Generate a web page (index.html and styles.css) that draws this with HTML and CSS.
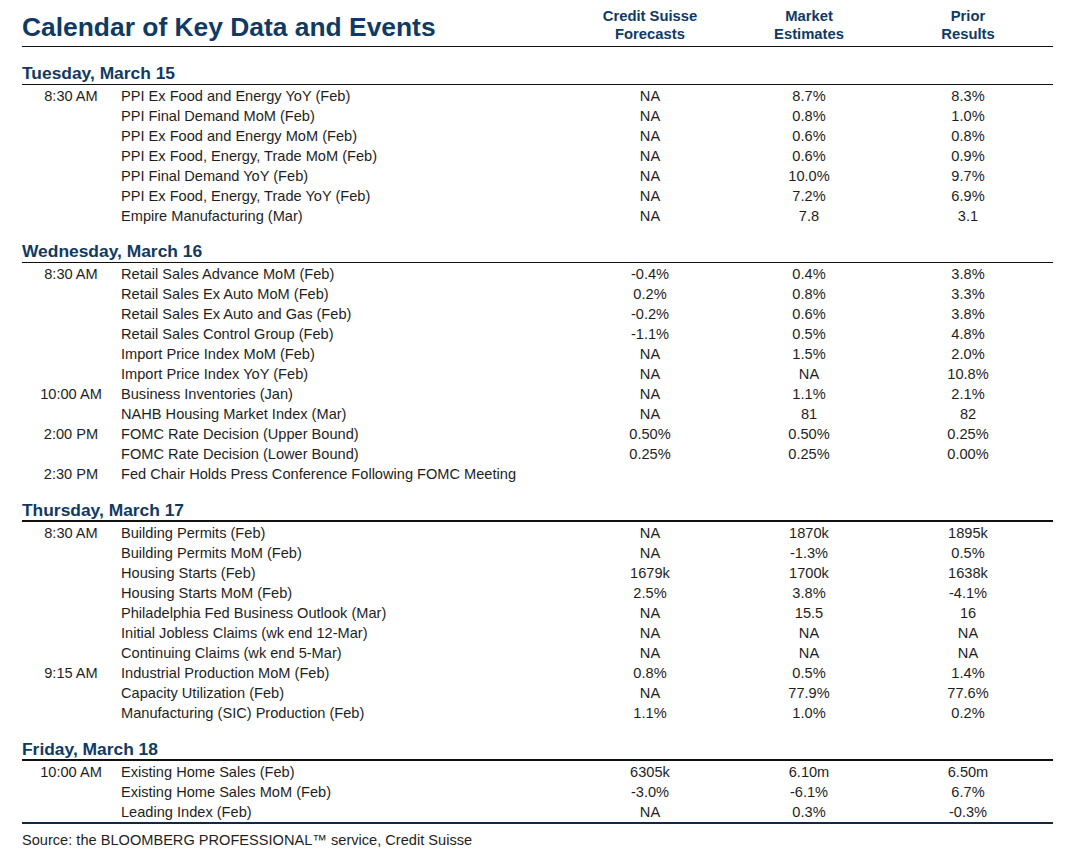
FILE: index.html
```html
<!DOCTYPE html>
<html>
<head>
<meta charset="utf-8">
<link rel="stylesheet" href="styles.css">
</head>
<body>
<div class="page">
  <div class="top grid">
    <h1 class="title">Calendar of Key Data and Events</h1>
    <div class="colhead">Credit Suisse<br>Forecasts</div>
    <div class="colhead">Market<br>Estimates</div>
    <div class="colhead">Prior<br>Results</div>
  </div>

  <section class="day">
    <h2 class="dayname thin">Tuesday, March 15</h2>
    <div class="rows">
      <div class="grid row"><span class="time">8:30 AM</span><span class="desc">PPI Ex Food and Energy YoY (Feb)</span><span class="v">NA</span><span class="v">8.7%</span><span class="v">8.3%</span></div>
      <div class="grid row"><span class="time"></span><span class="desc">PPI Final Demand MoM (Feb)</span><span class="v">NA</span><span class="v">0.8%</span><span class="v">1.0%</span></div>
      <div class="grid row"><span class="time"></span><span class="desc">PPI Ex Food and Energy MoM (Feb)</span><span class="v">NA</span><span class="v">0.6%</span><span class="v">0.8%</span></div>
      <div class="grid row"><span class="time"></span><span class="desc">PPI Ex Food, Energy, Trade MoM (Feb)</span><span class="v">NA</span><span class="v">0.6%</span><span class="v">0.9%</span></div>
      <div class="grid row"><span class="time"></span><span class="desc">PPI Final Demand YoY (Feb)</span><span class="v">NA</span><span class="v">10.0%</span><span class="v">9.7%</span></div>
      <div class="grid row"><span class="time"></span><span class="desc">PPI Ex Food, Energy, Trade YoY (Feb)</span><span class="v">NA</span><span class="v">7.2%</span><span class="v">6.9%</span></div>
      <div class="grid row"><span class="time"></span><span class="desc">Empire Manufacturing (Mar)</span><span class="v">NA</span><span class="v">7.8</span><span class="v">3.1</span></div>
    </div>
  </section>

  <section class="day">
    <h2 class="dayname thin">Wednesday, March 16</h2>
    <div class="rows">
      <div class="grid row"><span class="time">8:30 AM</span><span class="desc">Retail Sales Advance MoM (Feb)</span><span class="v">-0.4%</span><span class="v">0.4%</span><span class="v">3.8%</span></div>
      <div class="grid row"><span class="time"></span><span class="desc">Retail Sales Ex Auto MoM (Feb)</span><span class="v">0.2%</span><span class="v">0.8%</span><span class="v">3.3%</span></div>
      <div class="grid row"><span class="time"></span><span class="desc">Retail Sales Ex Auto and Gas (Feb)</span><span class="v">-0.2%</span><span class="v">0.6%</span><span class="v">3.8%</span></div>
      <div class="grid row"><span class="time"></span><span class="desc">Retail Sales Control Group (Feb)</span><span class="v">-1.1%</span><span class="v">0.5%</span><span class="v">4.8%</span></div>
      <div class="grid row"><span class="time"></span><span class="desc">Import Price Index MoM (Feb)</span><span class="v">NA</span><span class="v">1.5%</span><span class="v">2.0%</span></div>
      <div class="grid row"><span class="time"></span><span class="desc">Import Price Index YoY (Feb)</span><span class="v">NA</span><span class="v">NA</span><span class="v">10.8%</span></div>
      <div class="grid row"><span class="time">10:00 AM</span><span class="desc">Business Inventories (Jan)</span><span class="v">NA</span><span class="v">1.1%</span><span class="v">2.1%</span></div>
      <div class="grid row"><span class="time"></span><span class="desc">NAHB Housing Market Index (Mar)</span><span class="v">NA</span><span class="v">81</span><span class="v">82</span></div>
      <div class="grid row"><span class="time">2:00 PM</span><span class="desc">FOMC Rate Decision (Upper Bound)</span><span class="v">0.50%</span><span class="v">0.50%</span><span class="v">0.25%</span></div>
      <div class="grid row"><span class="time"></span><span class="desc">FOMC Rate Decision (Lower Bound)</span><span class="v">0.25%</span><span class="v">0.25%</span><span class="v">0.00%</span></div>
      <div class="grid row"><span class="time">2:30 PM</span><span class="desc">Fed Chair Holds Press Conference Following FOMC Meeting</span><span class="v"></span><span class="v"></span><span class="v"></span></div>
    </div>
  </section>

  <section class="day wide">
    <h2 class="dayname">Thursday, March 17</h2>
    <div class="rows">
      <div class="grid row"><span class="time">8:30 AM</span><span class="desc">Building Permits (Feb)</span><span class="v">NA</span><span class="v">1870k</span><span class="v">1895k</span></div>
      <div class="grid row"><span class="time"></span><span class="desc">Building Permits MoM (Feb)</span><span class="v">NA</span><span class="v">-1.3%</span><span class="v">0.5%</span></div>
      <div class="grid row"><span class="time"></span><span class="desc">Housing Starts (Feb)</span><span class="v">1679k</span><span class="v">1700k</span><span class="v">1638k</span></div>
      <div class="grid row"><span class="time"></span><span class="desc">Housing Starts MoM (Feb)</span><span class="v">2.5%</span><span class="v">3.8%</span><span class="v">-4.1%</span></div>
      <div class="grid row"><span class="time"></span><span class="desc">Philadelphia Fed Business Outlook (Mar)</span><span class="v">NA</span><span class="v">15.5</span><span class="v">16</span></div>
      <div class="grid row"><span class="time"></span><span class="desc">Initial Jobless Claims (wk end 12-Mar)</span><span class="v">NA</span><span class="v">NA</span><span class="v">NA</span></div>
      <div class="grid row"><span class="time"></span><span class="desc">Continuing Claims (wk end 5-Mar)</span><span class="v">NA</span><span class="v">NA</span><span class="v">NA</span></div>
      <div class="grid row"><span class="time">9:15 AM</span><span class="desc">Industrial Production MoM (Feb)</span><span class="v">0.8%</span><span class="v">0.5%</span><span class="v">1.4%</span></div>
      <div class="grid row"><span class="time"></span><span class="desc">Capacity Utilization (Feb)</span><span class="v">NA</span><span class="v">77.9%</span><span class="v">77.6%</span></div>
      <div class="grid row"><span class="time"></span><span class="desc">Manufacturing (SIC) Production (Feb)</span><span class="v">1.1%</span><span class="v">1.0%</span><span class="v">0.2%</span></div>
    </div>
  </section>

  <section class="day wide last">
    <h2 class="dayname">Friday, March 18</h2>
    <div class="rows">
      <div class="grid row"><span class="time">10:00 AM</span><span class="desc">Existing Home Sales (Feb)</span><span class="v">6305k</span><span class="v">6.10m</span><span class="v">6.50m</span></div>
      <div class="grid row"><span class="time"></span><span class="desc">Existing Home Sales MoM (Feb)</span><span class="v">-3.0%</span><span class="v">-6.1%</span><span class="v">6.7%</span></div>
      <div class="grid row"><span class="time"></span><span class="desc">Leading Index (Feb)</span><span class="v">NA</span><span class="v">0.3%</span><span class="v">-0.3%</span></div>
    </div>
  </section>

  <p class="source">Source: the BLOOMBERG PROFESSIONAL™ service, Credit Suisse</p>
</div>
</body>
</html>
```

FILE: styles.css
```css
* { box-sizing: border-box; }
html, body { margin: 0; padding: 0; background: #fff; }
body {
  font-family: "Liberation Sans", Arial, Helvetica, sans-serif;
  color: #1e1e1e;
}
.page {
  width: 1053px;
  padding-left: 22px;
  padding-top: 7px;
}
.grid {
  display: grid;
  grid-template-columns: 98px 450px 160px 158px 160px 1fr;
}
.top {
  border-bottom: 1px solid #111;
  height: 40px;
  align-items: start;
}
.title {
  grid-column: 1 / 3;
  margin: 0;
  font-size: 26.4px;
  line-height: 30px;
  padding-top: 5px;
  font-weight: 700;
  color: #0f3a64;
  white-space: nowrap;
}
.colhead {
  text-align: center;
  font-size: 14.8px;
  line-height: 18px;
  font-weight: 700;
  color: #0f3a64;
}
.day { margin-top: 16px; }
.day + .day { margin-top: 15px; }
.day + .day.wide { margin-top: 16px; }
.dayname {
  margin: 0;
  font-size: 17.4px;
  line-height: 20px;
  font-weight: 700;
  color: #0f3a64;
  padding-bottom: 0;
  border-bottom: 2px solid #111;
}
.dayname.thin { border-bottom-width: 1px; padding-bottom: 1px; }
.rows { padding-top: 1px; }
.day.last .rows {
  border-bottom: 2px solid #0f2a44;
}
.row {
  height: 20px;
  line-height: 20px;
  font-size: 14.6px;
}
.time { text-align: center; }
.desc { white-space: nowrap; padding-left: 1px; }
.v { text-align: center; }
.source {
  margin: 7px 0 0;
  font-size: 14.6px;
  line-height: 18px;
  color: #1e1e1e;
}
```
